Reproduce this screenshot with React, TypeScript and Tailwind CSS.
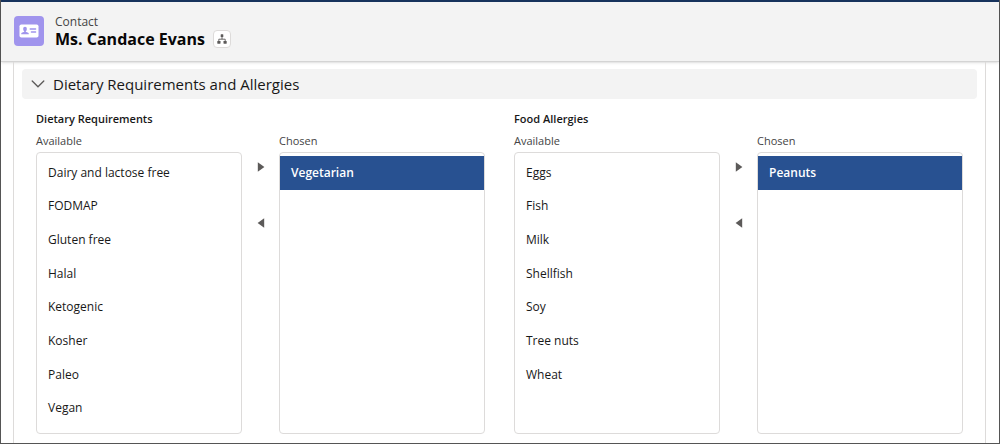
import React, { useId, useState } from 'react';

const DIETARY = [
  'Dairy and lactose free',
  'FODMAP',
  'Gluten free',
  'Halal',
  'Ketogenic',
  'Kosher',
  'Paleo',
  'Vegan',
];

const ALLERGIES = ['Eggs', 'Fish', 'Milk', 'Shellfish', 'Soy', 'Tree nuts', 'Wheat'];

type OptionListProps = {
  label: string;
  options: string[];
  selected: string | null;
  onSelect: (value: string) => void;
};

const OptionList: React.FC<OptionListProps> = ({ label, options, selected, onSelect }) => {
  const id = useId();
  return (
    <div className="flex-1 min-w-0">
      <div id={id} className="h-4 mb-[3px] text-[11px] leading-4 text-[#444444]">{label}</div>
      <ul
        role="listbox"
        aria-labelledby={id}
        className="grid grid-rows-8 h-[282px] pt-[3px] pb-2 bg-white border border-[#dddbda] rounded"
      >
        {options.map((option) => (
          <li
            key={option}
            role="option"
            tabIndex={0}
            aria-selected={option === selected}
            onClick={() => onSelect(option)}
            className={`flex items-center px-[11px] text-xs cursor-pointer ${
              option === selected ? 'bg-[#285191] text-white font-semibold' : 'text-[#181818]'
            }`}
          >
            {option}
          </li>
        ))}
      </ul>
    </div>
  );
};

type DualListboxProps = {
  title: string;
  available: string[];
  chosen: string[];
};

const DualListbox: React.FC<DualListboxProps> = ({ title, available, chosen }) => {
  const titleId = useId();
  const [left, setLeft] = useState(available);
  const [right, setRight] = useState(chosen);
  const [selected, setSelected] = useState<string | null>(chosen[0]);

  const moveRight = () => {
    if (!selected || !left.includes(selected)) return;
    setLeft(left.filter((item) => item !== selected));
    setRight([...right, selected]);
  };

  const moveLeft = () => {
    if (!selected || !right.includes(selected)) return;
    setRight(right.filter((item) => item !== selected));
    setLeft([...left, selected]);
  };

  return (
    <div role="group" aria-labelledby={titleId} className="flex-1 min-w-0">
      <h3 id={titleId} className="mb-1.5 text-[11px] leading-4 font-semibold text-[#181818]">{title}</h3>
      <div className="flex">
        <OptionList label="Available" options={left} selected={selected} onSelect={setSelected} />
        <div className="w-[37px] pt-5 flex flex-col items-center gap-7">
          <button type="button" aria-label="Move to Chosen" onClick={moveRight} className="flex items-center justify-center size-7">
            <svg viewBox="0 0 8 10" className="w-2 h-2.5 fill-[#5c5a59]"><path d="M0.8 0.2 L7.4 5 L0.8 9.8 Z" /></svg>
          </button>
          <button type="button" aria-label="Move to Available" onClick={moveLeft} className="flex items-center justify-center size-7">
            <svg viewBox="0 0 8 10" className="w-2 h-2.5 fill-[#5c5a59]"><path d="M7.2 0.2 L0.6 5 L7.2 9.8 Z" /></svg>
          </button>
        </div>
        <OptionList label="Chosen" options={right} selected={selected} onSelect={setSelected} />
      </div>
    </div>
  );
};

const ContactIcon = () => (
  <svg viewBox="0 0 30 30" className="size-[30px]" aria-hidden="true">
    <rect width="30" height="30" rx="4" fill="#a094ed" />
    <rect x="5.5" y="8.5" width="19" height="13" rx="1.8" fill="#fff" />
    <ellipse cx="11" cy="13" rx="1.9" ry="2.2" fill="#a094ed" />
    <path d="M10.2 14.5h1.6v1.2l2.4 1c.4.2.6.6.6 1.1v.4H7.2v-.4c0-.5.2-.9.6-1.1l2.4-1z" fill="#a094ed" />
    <path d="M16.2 13h5.4M17.4 16h4.2" stroke="#a094ed" strokeWidth="1.4" strokeLinecap="round" />
  </svg>
);

const HierarchyIcon = () => (
  <svg viewBox="0 0 10 10" className="size-2.5" aria-hidden="true">
    <path d="M5 2.5v2.7M1.8 7.6V5.2h6.4v2.4" fill="none" stroke="#5c5a59" strokeWidth="0.9" />
    <rect x="3.7" y="0.3" width="2.6" height="2.8" rx="0.4" fill="#5c5a59" />
    <rect x="0.3" y="7" width="3.2" height="2.7" rx="0.4" fill="#5c5a59" />
    <rect x="6.5" y="7" width="3.2" height="2.7" rx="0.4" fill="#5c5a59" />
  </svg>
);

export default function App() {
  const [open, setOpen] = useState(true);

  return (
    <div className="min-h-screen flex flex-col bg-white border-x border-b border-[#555555] font-['Open_Sans','Noto_Sans',sans-serif]">
      <header className="flex items-center gap-[11px] h-[62px] pb-px px-[13px] bg-[#f3f3f3] border-t-2 border-t-[#16325c] border-b border-b-[#d4d4d4] shadow-sm">
        <ContactIcon />
        <div>
          <p className="text-xs leading-4 text-[#444444]">Contact</p>
          <div className="flex items-center gap-2">
            <h1 className="text-base leading-4 font-bold text-[#080707]">Ms. Candace Evans</h1>
            <button
              type="button"
              aria-label="View hierarchy"
              className="flex items-center justify-center size-[18px] bg-white border border-[#dddbda] rounded"
            >
              <HierarchyIcon />
            </button>
          </div>
        </div>
      </header>

      <main className="flex-1 ml-3 mr-[13px] px-2 pt-[7px] pb-2 border-x border-[#dddbda]">
        <h2>
          <button
            type="button"
            aria-expanded={open}
            onClick={() => setOpen(!open)}
            className="flex items-center gap-2 w-full h-[30px] px-[9px] bg-[#f3f3f3] rounded text-[15px] text-[#181818]"
          >
            <svg viewBox="0 0 14 8" className="w-3.5 h-2" fill="none" stroke="#5c5a59" strokeWidth="1.3" strokeLinecap="round" aria-hidden="true">
              <path d="M1.2 1 L7 6.8 L12.8 1" />
            </svg>
            Dietary Requirements and Allergies
          </button>
        </h2>
        {open && (
          <div className="flex gap-[29px] px-3.5 pt-3">
            <DualListbox title="Dietary Requirements" available={DIETARY} chosen={['Vegetarian']} />
            <DualListbox title="Food Allergies" available={ALLERGIES} chosen={['Peanuts']} />
          </div>
        )}
      </main>
    </div>
  );
}
